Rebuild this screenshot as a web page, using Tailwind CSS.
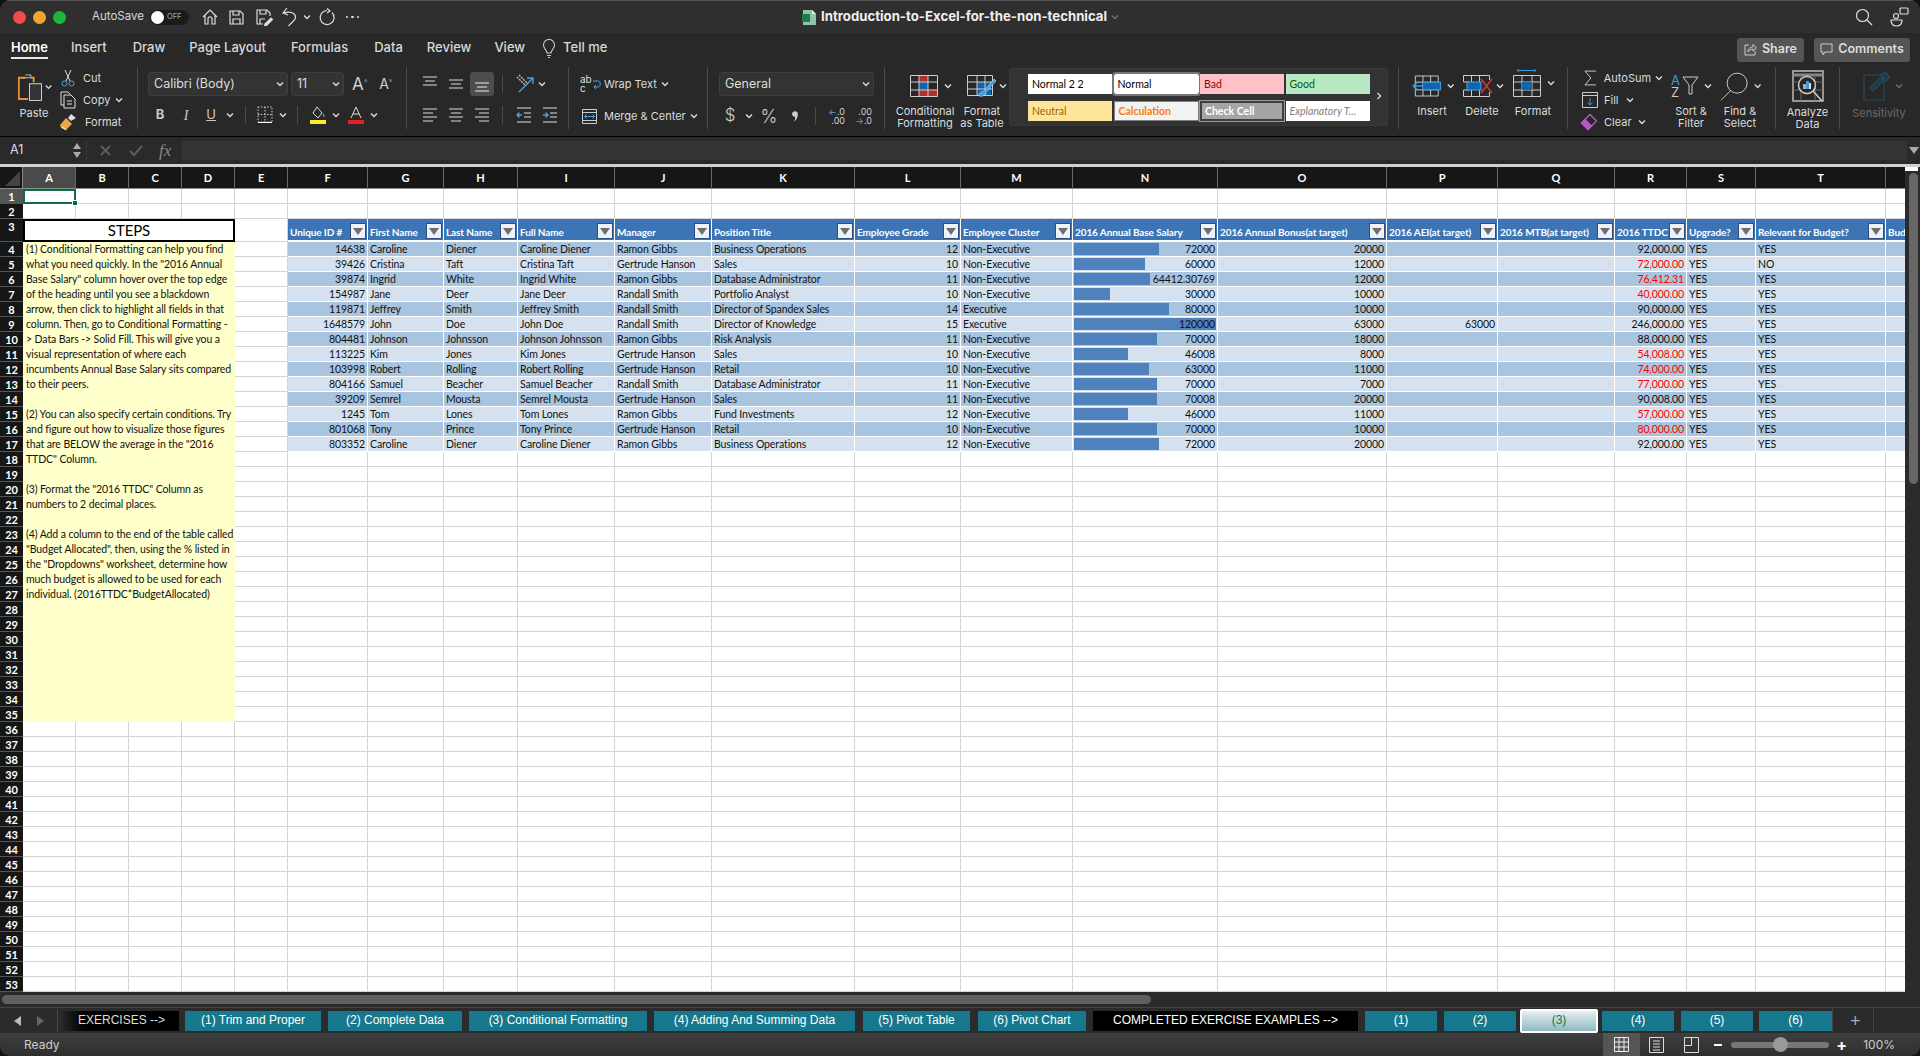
<!DOCTYPE html>
<html lang="en">
<head>
  <meta charset="UTF-8" />
  <title>Introduction-to-Excel-for-the-non-technical</title>
  <script src="https://cdn.jsdelivr.net/npm/@tailwindcss/browser@4"></script>
</head>
<body class="bg-[#111] overflow-hidden">
  <svg class="hidden">
    <symbol id="chev" viewBox="0 0 12 12"><path d="M3 4.5l3 3 3-3" fill="none" stroke="#d8d8d8" stroke-width="1.5"/></symbol>
  </svg>
  <div class="w-[1920px] h-[1056px] flex flex-col overflow-hidden rounded-[10px] text-[#e0e0e0] [font-family:Inter,sans-serif]">

    <!-- Title bar -->
    <div class="h-[33px] shrink-0 bg-[#2f2f2f] border-t border-[#555] flex items-center">
      <div class="w-[802px] flex items-center">
        <span class="ml-[13px] w-[13px] h-[13px] rounded-full bg-[#ee4c4c]"></span>
        <span class="ml-[7px] w-[13px] h-[13px] rounded-full bg-[#f2a52e]"></span>
        <span class="ml-[7px] w-[13px] h-[13px] rounded-full bg-[#1fb53d]"></span>
        <span class="ml-[26px] text-[11.5px] text-[#d8d8d8]">AutoSave</span>
        <div class="ml-[6px] w-[39px] h-[15px] rounded-full bg-[#1b1b1b] flex items-center">
          <span class="ml-[1px] w-[13px] h-[13px] rounded-full bg-white"></span>
          <span class="ml-[3px] text-[7.5px] text-[#aaa]">OFF</span>
        </div>
        <svg class="ml-[12px]" width="18" height="18" viewBox="0 0 18 18" fill="none" stroke="#ddd" stroke-width="1.2"><path d="M2 9l7-7 7 7M4 7v9h3v-5c0-3 4-3 4 0v5h3V7"/></svg>
        <svg class="ml-[9px]" width="17" height="17" viewBox="0 0 17 17" fill="none" stroke="#ddd" stroke-width="1.2"><path d="M2 2h10l3 3v10H2zM5 2v4h6V2M5 15v-5h7v5"/></svg>
        <svg class="ml-[10px]" width="18" height="18" viewBox="0 0 18 18" fill="none" stroke="#ddd" stroke-width="1.2"><path d="M8 16H2V2h10l3 3v3M5 2v4h6V2M5 16v-5h5"/><path d="M10 16l6-6 1.5 1.5-6 6-2 .5z" fill="#ddd"/></svg>
        <svg class="ml-[9px]" width="16" height="20" viewBox="0 0 16 20" fill="none" stroke="#ddd" stroke-width="1.2"><path d="M5 1L1 6l5 2M1.500 6c9-3 14 2 11 7l-6 6"/></svg>
        <svg class="ml-[3px]" width="12" height="12"><use href="#chev"/></svg>
        <svg class="ml-[5px]" width="18" height="18" viewBox="0 0 18 18" fill="none" stroke="#ddd" stroke-width="1.2"><path d="M9 2.500a7 7 0 1 0 5 2M9 .5l3 2.500-3 2"/></svg>
        <span class="ml-[10px] flex gap-[3px]"><i class="w-[2.500px] h-[2.500px] rounded-full bg-[#ddd]"></i><i class="w-[2.500px] h-[2.500px] rounded-full bg-[#ddd]"></i><i class="w-[2.500px] h-[2.500px] rounded-full bg-[#ddd]"></i></span>
      </div>
      <svg width="15" height="17" viewBox="0 0 15 17"><path d="M1 1h9l4 4v11H1z" fill="#8ec5a8"/><path d="M10 1v4h4" fill="#dff0e6"/><rect x="0" y="5" width="8" height="8" fill="#1f7a4c"/></svg>
      <span class="ml-[4px] text-[13.2px] font-bold text-[#eee]">Introduction-to-Excel-for-the-non-technical</span>
      <svg class="ml-[2px] opacity-40" width="12" height="12"><use href="#chev"/></svg>
      <svg class="ml-auto" width="18" height="18" viewBox="0 0 18 18" fill="none" stroke="#ddd" stroke-width="1.2"><circle cx="7.500" cy="7.500" r="6"/><path d="M12 12l5 5"/></svg>
      <svg class="ml-[17px] mr-[11px]" width="19" height="20" viewBox="0 0 19 20" fill="none" stroke="#ddd" stroke-width="1.2"><rect x="10" y="1" width="8" height="6" rx="1"/><circle cx="6" cy="9" r="2.500"/><path d="M1 13h11c0 4-2 6-5.500 6S1 17 1 13z"/></svg>
    </div>

    <!-- Ribbon -->
    <div class="h-[104px] shrink-0 bg-[#282828] border-b border-black">
      <div class="h-[30px] flex items-center text-[13px] font-medium text-[#d8d8d8]">
        <span class="ml-[11px] text-white font-semibold border-b-2 border-[#e8e8e8] h-[22px] leading-[20px]">Home</span>
        <span class="ml-[23px]">Insert</span>
        <span class="ml-[26px]">Draw</span>
        <span class="ml-[24px]">Page Layout</span>
        <span class="ml-[25px]">Formulas</span>
        <span class="ml-[26px]">Data</span>
        <span class="ml-[24px]">Review</span>
        <span class="ml-[23px]">View</span>
        <svg class="ml-[17px]" width="14" height="19" viewBox="0 0 14 19" fill="none" stroke="#ccc" stroke-width="1.1"><path d="M5 14c0-3-3.500-4-3.500-8a5.500 5.500 0 0 1 11 0c0 4-3.500 5-3.500 8zM5 16.500h4M6 18.500h2"/></svg>
        <span class="ml-[7px]">Tell me</span>
        <div class="ml-auto flex text-[12.5px] font-semibold text-[#ddd]">
          <span class="w-[67px] h-[24px] rounded-[3px] bg-[#555] flex items-center justify-center gap-[5px] mt-[3px]">
            <svg width="13" height="13" viewBox="0 0 13 13" fill="none" stroke="#ccc"><path d="M5 2H1v10h10V8M4 9c0-4 3-5 5-5V1.500l3.500 3.500L9 8V6C7 6 5 7 4 9z"/></svg>Share</span>
          <span class="ml-[10px] mr-[10px] w-[96px] h-[24px] rounded-[3px] bg-[#555] flex items-center justify-center gap-[5px] mt-[3px]">
            <svg width="13" height="13" viewBox="0 0 13 13" fill="none" stroke="#ccc"><path d="M1 1h11v8H5l-2 3V9H1z"/></svg>Comments</span>
        </div>
      </div>

      <div class="mt-[4px] flex text-[11px] text-[#dcdcdc]">
        <!-- Clipboard -->
        <div class="w-[138px] h-[62px] border-r border-[#4a4a4a] flex">
          <div class="ml-[14px] w-[40px] flex flex-col">
            <div class="mt-[5px] flex items-center">
              <svg class="ml-[3px]" width="28" height="30" viewBox="0 0 28 30" fill="none"><path d="M9 5H2v23h10" stroke="#e0923a" stroke-width="2"/><path d="M6 5h9V2h-3M9 2h3" stroke="#ccc"/><path d="M15 5h3v5" stroke="#e0923a" stroke-width="2"/><rect x="13.500" y="11.500" width="13" height="18" stroke="#ddd" fill="#333"/></svg>
              <svg width="12" height="12"><use href="#chev"/></svg>
            </div>
            <span class="mt-[3px] text-center">Paste</span>
          </div>
          <div class="ml-[6px] flex flex-col">
            <div class="h-[22px] shrink-0 flex items-center">
              <svg width="16" height="18" viewBox="0 0 16 18" fill="none" stroke="#ddd"><path d="M5 1l5 11M11 1L6 12" /><circle cx="4.500" cy="14.500" r="2.500" stroke="#4aa3df"/><circle cx="11.500" cy="14.500" r="2.500" stroke="#4aa3df"/></svg>
              <span class="ml-[7px]">Cut</span>
            </div>
            <div class="h-[22px] shrink-0 flex items-center">
              <svg width="16" height="18" viewBox="0 0 16 18" fill="none" stroke="#ddd"><path d="M4 14H1V1h7l2 2M4 4h7l4 4v9H4zM7 10h5M7 13h5"/></svg>
              <span class="ml-[7px]">Copy</span>
              <svg class="ml-[3px]" width="12" height="12"><use href="#chev"/></svg>
            </div>
            <div class="h-[22px] shrink-0 flex items-center">
              <svg width="17" height="18" viewBox="0 0 17 18"><path d="M11 1l5 4-5 3-3-3z" fill="#ddd"/><path d="M6 5l6 6-6 6-5-2-1-3z" fill="#eaa74a"/><path d="M2 14l4 3" stroke="#fff"/></svg>
              <span class="ml-[8px]">Format</span>
            </div>
          </div>
        </div>

        <!-- Font -->
        <div class="w-[269px] h-[62px] border-r border-[#4a4a4a]">
          <div class="mt-[5px] h-[24px] flex items-center">
            <div class="ml-[10px] w-[140px] h-[24px] rounded-[3px] bg-[#333] border border-[#3e3e3e] flex items-center pl-[5px] text-[12.5px]">Calibri (Body)<svg class="ml-auto mr-[1px]" width="12" height="12"><use href="#chev"/></svg></div>
            <div class="ml-[3px] w-[53px] h-[24px] rounded-[3px] bg-[#333] border border-[#3e3e3e] flex items-center pl-[5px] text-[12.5px]">11<svg class="ml-auto mr-[1px]" width="12" height="12"><use href="#chev"/></svg></div>
            <span class="ml-[6px] w-[20px] text-[17px] leading-none text-center text-[#cfcfcf]">A<sup class="text-[#4aa3df] text-[9px]">˄</sup></span>
            <span class="ml-[6px] w-[20px] text-[14px] leading-none text-center text-[#cfcfcf]">A<sup class="text-[#4aa3df] text-[9px]">˅</sup></span>
          </div>
          <div class="mt-[7px] h-[24px] flex items-center text-[#c9c9c9]">
            <span class="ml-[12px] w-[20px] text-center font-bold text-[13px]">B</span>
            <span class="ml-[6px] w-[20px] text-center italic text-[14px] [font-family:'Liberation_Serif',serif]">I</span>
            <span class="ml-[5px] w-[20px] text-center underline text-[13px]">U</span>
            <svg class="ml-[3px]" width="12" height="12"><use href="#chev"/></svg>
            <i class="ml-[9px] w-px h-[18px] bg-[#4a4a4a]"></i>
            <svg class="ml-[9px]" width="20" height="20" viewBox="0 0 20 20" fill="none" stroke="#ccc" stroke-dasharray="1.500 1.500"><path d="M3 2h14v15H3zM10 2v15M3 9.500h14"/><path d="M3 17.500h14" stroke="#fff" stroke-dasharray="none"/></svg>
            <svg class="ml-[2px]" width="12" height="12"><use href="#chev"/></svg>
            <i class="ml-[8px] w-px h-[18px] bg-[#4a4a4a]"></i>
            <svg class="ml-[10px]" width="20" height="20" viewBox="0 0 20 20" fill="none" stroke="#ddd"><path d="M9 2l5 6-4 5-5-5z"/><path d="M15 8c2 2 2 4 1 4s-1-2-1-4z" fill="#4aa3df" stroke="none"/><rect x="2" y="15" width="16" height="4" fill="#f7ec2d" stroke="none"/></svg>
            <svg class="ml-[2px]" width="12" height="12"><use href="#chev"/></svg>
            <svg class="ml-[4px]" width="20" height="20" viewBox="0 0 20 20" fill="none" stroke="#ddd"><path d="M5 13l5-11 5 11M7 9h6"/><rect x="2" y="15" width="16" height="4" fill="#ea1c24" stroke="none"/></svg>
            <svg class="ml-[2px]" width="12" height="12"><use href="#chev"/></svg>
          </div>
        </div>

        <!-- Alignment -->
        <div class="w-[162px] h-[62px] border-r border-[#4a4a4a]">
          <div class="mt-[5px] h-[24px] flex items-center">
            <svg class="ml-[11px]" width="24" height="24" viewBox="0 0 24 24" stroke="#ddd"><path d="M5 5h14M7 9h10M5 13h14"/></svg>
            <svg class="ml-[2px]" width="24" height="24" viewBox="0 0 24 24" stroke="#ddd"><path d="M5 8h14M7 12h10M5 16h14"/></svg>
            <div class="ml-[2px] w-[24px] h-[24px] rounded-[3px] bg-[#4d4d4d]"><svg width="24" height="24" viewBox="0 0 24 24" stroke="#eee"><path d="M5 11h14M7 15h10M5 19h14"/></svg></div>
            <i class="ml-[8px] w-px h-[18px] bg-[#4a4a4a]"></i>
            <svg class="ml-[9px]" width="24" height="24" viewBox="0 0 24 24" fill="none"><path d="M5 5l9 9M7 3l9 9" stroke="#ccc" stroke-width="1.300" stroke-dasharray="2 1"/><path d="M7 20L20 7M15 6h6v6" stroke="#4aa3df" stroke-width="1.300"/></svg>
            <svg width="12" height="12"><use href="#chev"/></svg>
          </div>
          <div class="mt-[7px] h-[24px] flex items-center">
            <svg class="ml-[11px]" width="24" height="24" viewBox="0 0 24 24" stroke="#ddd"><path d="M5 6h14M5 10h10M5 14h14M5 18h10"/></svg>
            <svg class="ml-[2px]" width="24" height="24" viewBox="0 0 24 24" stroke="#ddd"><path d="M5 6h14M7 10h10M5 14h14M7 18h10"/></svg>
            <svg class="ml-[2px]" width="24" height="24" viewBox="0 0 24 24" stroke="#ddd"><path d="M5 6h14M9 10h10M5 14h14M9 18h10"/></svg>
            <i class="ml-[8px] w-px h-[18px] bg-[#4a4a4a]"></i>
            <svg class="ml-[9px]" width="24" height="24" viewBox="0 0 24 24" fill="none"><path d="M5 5h14M12 10h7M12 14h7M5 19h14" stroke="#ddd"/><path d="M10 12H5M7.500 9.500L5 12l2.500 2.500" stroke="#4aa3df" stroke-width="1.300"/></svg>
            <svg class="ml-[2px]" width="24" height="24" viewBox="0 0 24 24" fill="none"><path d="M5 5h14M12 10h7M12 14h7M5 19h14" stroke="#ddd"/><path d="M5 12h5M7.500 9.500L10 12l-2.500 2.500" stroke="#4aa3df" stroke-width="1.300"/></svg>
          </div>
        </div>

        <!-- Wrap and merge -->
        <div class="w-[139px] h-[62px] border-r border-[#4a4a4a]">
          <div class="mt-[5px] h-[24px] flex items-center">
            <span class="ml-[11px] w-[22px] flex items-center text-[#ddd] leading-[9px] text-[10px]"><span>ab<br />c</span><svg width="9" height="14" viewBox="0 0 9 14" fill="none" stroke="#4aa3df"><path d="M1 4h5c3 0 3 6 0 6H2M4 8l-2 2 2 2"/></svg></span>
            <span class="ml-[2px]">Wrap Text</span>
            <svg class="ml-[2px]" width="12" height="12"><use href="#chev"/></svg>
          </div>
          <div class="mt-[8px] h-[24px] flex items-center">
            <svg class="ml-[13px]" width="15" height="15" viewBox="0 0 15 15" fill="none" stroke="#ccc"><path d="M.5.500h14v14H.5zM.5 3.500h14M.5 11.500h14"/><path d="M2.500 7.500h10M4.500 5.500l-2 2 2 2M10.500 5.500l2 2-2 2" stroke="#4aa3df"/></svg>
            <span class="ml-[7px]">Merge &amp; Center</span>
            <svg class="ml-[2px]" width="12" height="12"><use href="#chev"/></svg>
          </div>
        </div>

        <!-- Number -->
        <div class="w-[177px] h-[62px] border-r border-[#4a4a4a]">
          <div class="mt-[5px] h-[24px] flex items-center">
            <div class="ml-[11px] w-[155px] h-[24px] rounded-[3px] bg-[#333] border border-[#3e3e3e] flex items-center pl-[5px] text-[12.5px]">General<svg class="ml-auto mr-[1px]" width="12" height="12"><use href="#chev"/></svg></div>
          </div>
          <div class="mt-[8px] h-[24px] flex items-center text-[#cfcfcf]">
            <span class="ml-[12px] w-[20px] text-center text-[17px] font-light">$</span>
            <svg class="ml-[3px]" width="12" height="12"><use href="#chev"/></svg>
            <span class="ml-[4px] w-[20px] text-center text-[18px] font-light">%</span>
            <svg class="ml-[6px]" width="20" height="20" viewBox="0 0 20 20"><circle cx="10" cy="8" r="2.800" fill="#cfcfcf"/><path d="M12.500 8c.5 4-1.500 6.500-4 7.500 1.500-1.500 2-3 1.500-5z" fill="#cfcfcf"/></svg>
            <i class="ml-[10px] w-px h-[18px] bg-[#4a4a4a]"></i>
            <span class="ml-[9px] w-[20px] leading-[9px] text-[9px] text-right"><b class="font-normal text-[#4aa3df]">←</b>.0<br />.00</span>
            <span class="ml-[7px] w-[20px] leading-[9px] text-[9px] text-right">.00<br /><b class="font-normal text-[#4aa3df]">→</b>.0</span>
          </div>
        </div>

        <!-- Styles -->
        <div class="w-[514px] h-[62px] border-r border-[#4a4a4a] flex">
          <div class="ml-[8px] w-[64px] flex flex-col items-center">
            <div class="mt-[8px] h-[22px] flex items-center">
              <svg class="ml-[13px]" width="28" height="22" viewBox="0 0 28 22" fill="none"><rect x="9" y="1" width="9" height="6" fill="#b32d2d"/><rect x="9" y="7" width="9" height="8" fill="#0f66b0"/><rect x="9" y="15" width="18" height="6" fill="#b32d2d"/><path d="M.5.500h27v21H.5zM9 .5v21M18 .5v21M.5 7h27M.5 15h27" stroke="#ccc"/></svg>
              <svg class="ml-[4px]" width="12" height="12"><use href="#chev"/></svg>
            </div>
            <span class="mt-[8px] text-center leading-[12px]">Conditional Formatting</span>
          </div>
          <div class="w-[50px] flex flex-col items-center">
            <div class="mt-[8px] h-[22px] flex items-center">
              <svg class="ml-[11px]" width="30" height="24" viewBox="0 0 30 24" fill="none"><rect x="10" y="8" width="14" height="14" fill="#0f66b0"/><path d="M.5 1.500h25v20H.5zM10 1.500v20M18 1.500v20M.5 8h25M.5 15h25" stroke="#ccc"/><path d="M12 22c0-4 3-4 5-5L27 5l2 2-10 11c0 3-3 5-7 4z" fill="#3d9bd8" stroke="#ddd" stroke-width=".6"/></svg>
              <svg width="12" height="12"><use href="#chev"/></svg>
            </div>
            <span class="mt-[8px] text-center leading-[12px]">Format<br />as Table</span>
          </div>
          <div class="ml-[2px] mt-[1px] w-[379px] h-[58px] rounded-[3px] bg-[#333] border border-[#3a3a3a] flex">
            <div class="ml-[18px] mt-[5px] grid grid-cols-[84px_85px_84px_84px] grid-rows-[20px_20px] gap-x-[1.5px] gap-y-[7px] text-[10.5px] [font-family:Lato,sans-serif]">
              <div class="bg-white text-black pl-[4px] leading-[20px]">Normal 2 2</div>
              <div class="bg-white text-black pl-[4px] leading-[20px] outline-2 outline-[#777] rounded-[2px]">Normal</div>
              <div class="bg-[#ffc0c8] text-[#9c0006] pl-[4px] leading-[20px]">Bad</div>
              <div class="bg-[#b9e9c4] text-[#006100] pl-[4px] leading-[20px]">Good</div>
              <div class="bg-[#ffe599] text-[#9c6500] pl-[4px] leading-[20px]">Neutral</div>
              <div class="bg-[#f2f2f2] text-[#fa7d00] font-bold pl-[4px] leading-[18px] border border-[#7f7f7f]">Calculation</div>
              <div class="bg-[#a5a5a5] text-white font-bold pl-[3px] leading-[16px] border-2 border-double border-[#3f3f3f] outline outline-[#999]">Check Cell</div>
              <div class="bg-white text-[#7f7f7f] italic pl-[4px] leading-[20px]">Explanatory T...</div>
            </div>
            <svg class="ml-[3px] mt-[21px]" width="12" height="12" viewBox="0 0 12 12"><path d="M4.500 3l3 3-3 3" fill="none" stroke="#ddd" stroke-width="1.300"/></svg>
          </div>
        </div>

        <!-- Cells -->
        <div class="w-[169px] h-[62px] border-r border-[#4a4a4a] flex">
          <div class="ml-[9px] w-[48px] flex flex-col">
            <div class="mt-[8px] h-[22px] flex items-center">
              <svg class="ml-[4px]" width="31" height="22" viewBox="0 0 31 22" fill="none"><path d="M3.500.5h24v21h-24zM11.500.5v21M19.500.5v21M3.500 7h24M3.500 15h24" stroke="#ccc"/><rect x="11" y="7" width="19" height="8" fill="#0f66b0" stroke="#4aa3df"/><path d="M12 11H2M6 6.500L1.500 11 6 15.500" stroke="#3d9bd8" stroke-width="1.800"/></svg>
              <svg class="ml-[3px]" width="12" height="12"><use href="#chev"/></svg>
            </div>
            <span class="mt-[6px] text-center">Insert</span>
          </div>
          <div class="ml-[2px] w-[48px] flex flex-col">
            <div class="mt-[8px] h-[22px] flex items-center">
              <svg class="ml-[5px]" width="30" height="22" viewBox="0 0 30 22" fill="none"><path d="M.5.500h26M.5 21.500h26M8.500.5v21M16.500.5v21M.5 7h6M.5 15h6M.5.500V7M.5 15v6.500M26.500.5V5M26.500 17v4.500" stroke="#ccc"/><rect x="4" y="7" width="14" height="8" fill="#0f66b0" stroke="#4aa3df"/><path d="M18 4l11 14M29 4L18 18" stroke="#e0383c" stroke-width="1.300"/></svg>
              <svg class="ml-[1px]" width="12" height="12"><use href="#chev"/></svg>
            </div>
            <span class="mt-[6px] text-center">Delete</span>
          </div>
          <div class="ml-[3px] w-[48px] flex flex-col">
            <div class="mt-[2px] h-[28px] flex items-center">
              <svg class="ml-[4px]" width="28" height="28" viewBox="0 0 28 28" fill="none"><path d="M5 1.500h17M5 0v3M22 0v3" stroke="#3d9bd8"/><path d="M.5 6.500h27v21H.5zM9 6.500v21M19 6.500v21M.5 13h27M.5 21h27" stroke="#ccc"/><rect x="9" y="13" width="10" height="8" fill="#0f66b0"/></svg>
              <svg class="ml-[4px]" width="12" height="12"><use href="#chev"/></svg>
            </div>
            <span class="mt-[6px] text-center">Format</span>
          </div>
        </div>

        <!-- Editing -->
        <div class="w-[208px] h-[62px] border-r border-[#4a4a4a] flex">
          <div class="w-[97px] flex flex-col">
            <div class="h-[22px] shrink-0 flex items-center">
              <svg class="ml-[12px]" width="20" height="20" viewBox="0 0 20 20" fill="none" stroke="#ccc"><path d="M16 3H5l6 7-6 7h11"/></svg>
              <span class="ml-[4px]">AutoSum</span>
              <svg class="ml-[2px]" width="12" height="12"><use href="#chev"/></svg>
            </div>
            <div class="h-[22px] shrink-0 flex items-center">
              <svg class="ml-[14px]" width="16" height="16" viewBox="0 0 16 16" fill="none"><path d="M.5.500h15v15H.5zM.5 3.500h15" stroke="#ccc"/><path d="M8 6v7M5.500 10.500L8 13l2.500-2.500" stroke="#3d9bd8"/></svg>
              <span class="ml-[6px]">Fill</span>
              <svg class="ml-[5px]" width="12" height="12"><use href="#chev"/></svg>
            </div>
            <div class="h-[22px] shrink-0 flex items-center">
              <svg class="ml-[12px]" width="18" height="18" viewBox="0 0 18 18" fill="none" stroke="#b45cc0" stroke-width="1.300"><path d="M1.500 10L10 1.500 16.500 8 8 16.500z"/><path d="M1.500 10L5 6.500 11.500 13 8 16.500z" fill="#b45cc0"/></svg>
              <span class="ml-[6px]">Clear</span>
              <svg class="ml-[4px]" width="12" height="12"><use href="#chev"/></svg>
            </div>
          </div>
          <div class="w-[52px] flex flex-col">
            <div class="mt-[6px] h-[26px] flex items-center">
              <span class="ml-[6px] w-[11px] leading-[12px] text-[13px] text-[#3d9bd8]">A<br /><span class="text-[#ccc]">Z</span></span>
              <svg width="17" height="20" viewBox="0 0 17 20" fill="none" stroke="#ccc"><path d="M1 1h15l-6 8v9H7V9z"/></svg>
              <svg class="ml-[3px]" width="12" height="12"><use href="#chev"/></svg>
            </div>
            <span class="mt-[6px] text-center leading-[12px]">Sort &amp;<br />Filter</span>
          </div>
          <div class="w-[46px] flex flex-col">
            <div class="mt-[5px] h-[28px] flex items-center">
              <svg class="ml-[3px]" width="30" height="30" viewBox="0 0 30 30" fill="none" stroke="#ccc"><circle cx="18" cy="12" r="10.500"/><path d="M11 20L1 30"/></svg>
              <svg class="ml-[3px]" width="12" height="12"><use href="#chev"/></svg>
            </div>
            <span class="mt-[5px] text-center leading-[12px]">Find &amp;<br />Select</span>
          </div>
        </div>

        <!-- Analyze -->
        <div class="w-[64px] h-[62px] border-r border-[#4a4a4a] flex flex-col items-center">
          <svg class="mt-[3px] shrink-0" width="32" height="32" viewBox="0 0 32 32" fill="none"><path d="M1 1h30v30H1z" stroke="#bbb" stroke-width="1.500"/><path d="M1 5h30" stroke="#888" stroke-width="3"/><path d="M1 12h30M1 20h30M9 5v26M23 5v26" stroke="#666"/><circle cx="15" cy="15" r="8.500" fill="#282828" stroke="#ccc" stroke-width="1.500"/><rect x="11" y="14" width="3" height="5" fill="#aaa"/><rect x="14" y="11" width="3" height="8" fill="#3d9bd8"/><rect x="17" y="13" width="2" height="6" fill="#ddd"/><path d="M21 21l9 10" stroke="#ccc" stroke-width="1.500"/></svg>
          <span class="mt-[4px] text-center leading-[12px]">Analyze<br />Data</span>
        </div>

        <!-- Sensitivity -->
        <div class="w-[78px] h-[62px] flex flex-col items-center text-[#6b6b6b]">
          <div class="mt-[4px] h-[30px] flex items-center">
            <svg class="ml-[10px]" width="28" height="30" viewBox="0 0 28 30" fill="none" stroke="#234a5e" stroke-width="1.200"><path d="M1 4h20v25H1z"/><path d="M7 17L18 6l3 3-11 11zM18 4l4-3 5 5-4 4z" fill="#1e3a4a"/></svg>
            <svg class="ml-[2px] opacity-40" width="12" height="12"><use href="#chev"/></svg>
          </div>
          <span class="mt-[4px]">Sensitivity</span>
        </div>
      </div>
    </div>

    <!-- Formula bar -->
    <div class="h-[27px] shrink-0 bg-[#2a2a2a] flex items-center text-[12.5px]">
      <span class="ml-[10px] w-[60px] text-[#ddd]">A1</span>
      <span class="w-[14px] flex flex-col items-center gap-[3px]">
        <i class="w-0 h-0 border-x-[4px] border-x-transparent border-b-[6px] border-b-[#aaa]"></i>
        <i class="w-0 h-0 border-x-[4px] border-x-transparent border-t-[6px] border-t-[#aaa]"></i>
      </span>
      <i class="ml-[2px] w-px h-[20px] bg-[#3a3a3a]"></i>
      <svg class="ml-[12px]" width="13" height="13" viewBox="0 0 13 13" stroke="#5d5d5d" stroke-width="2"><path d="M2 2l9 9M11 2l-9 9"/></svg>
      <svg class="ml-[17px]" width="14" height="13" viewBox="0 0 14 13" fill="none" stroke="#5d5d5d" stroke-width="2"><path d="M1 7l4 4 8-9"/></svg>
      <span class="ml-[16px] w-[20px] italic text-[17px] text-[#888] [font-family:'Liberation_Serif',serif]">fx</span>
      <div class="ml-[3px] w-[1725px] h-[19px] bg-[#333]"></div>
      <i class="ml-[2px] w-0 h-0 border-x-[5px] border-x-transparent border-t-[7px] border-t-[#aaa]"></i>
    </div>
    <div class="h-[3px] shrink-0 bg-[#d0d0d0]"></div>

    <!-- Sheet -->
    <div class="h-[825px] shrink-0 flex bg-white">
      <div class="w-[1905px] overflow-hidden">
        <div id="sheet" class="grid w-max grid-cols-[23px_53px_53px_53px_53px_53px_80px_76px_74px_97px_97px_143px_106px_112px_145px_169px_111px_117px_72px_69px_130px_60px] grid-rows-[22px_15px_15px_23px_repeat(50,15px)] text-[10.5px] tracking-[-0.1px] leading-[14px] text-[#111] [font-family:Lato,sans-serif]"></div>
      </div>
      <div class="w-[15px] bg-[#2a2a2a] flex flex-col items-start">
        <div class="w-[13px] h-[4px] bg-white"></div>
        <div class="mt-[2px] ml-[4px] w-[9px] h-[311px] rounded-full bg-[#666]"></div>
      </div>
    </div>

    <!-- Horizontal scroll -->
    <div class="h-[15px] shrink-0 bg-[#2a2a2a] flex items-center">
      <div class="ml-[2px] w-[1149px] h-[9px] rounded-full bg-[#5f5f5f]"></div>
    </div>

    <!-- Sheet tabs -->
    <div class="h-[26px] shrink-0 bg-[#2b2b2b] border-t border-[#444] flex items-center text-[12px] text-white [font-family:'Liberation_Sans',sans-serif]">
      <i class="ml-[14px] w-0 h-0 border-y-[5px] border-y-transparent border-r-[7px] border-r-[#bbb]"></i>
      <i class="ml-[16px] w-0 h-0 border-y-[5px] border-y-transparent border-l-[7px] border-l-[#666]"></i>
      <i class="ml-[13px] w-px h-[24px] bg-[#444]"></i>
      <div class="ml-[2px] w-[119px] h-[20px] bg-gradient-to-r from-[#2b2b2b] via-black via-30% to-black pl-[18px] leading-[19px] text-[#ddd]">EXERCISES --&gt;</div>
      <div class="ml-[6px] w-[136px] h-[20px] bg-[#17778c] text-center leading-[19px]">(1) Trim and Proper</div>
      <div class="ml-[7px] w-[134px] h-[20px] bg-[#17778c] text-center leading-[19px]">(2) Complete Data</div>
      <div class="ml-[7px] w-[178px] h-[20px] bg-[#17778c] text-center leading-[19px]">(3) Conditional Formatting</div>
      <div class="ml-[7px] w-[201px] h-[20px] bg-[#17778c] text-center leading-[19px]">(4) Adding And Summing Data</div>
      <div class="ml-[8px] w-[107px] h-[20px] bg-[#17778c] text-center leading-[19px]">(5) Pivot Table</div>
      <div class="ml-[8px] w-[108px] h-[20px] bg-[#17778c] text-center leading-[19px]">(6) Pivot Chart</div>
      <div class="ml-[7px] w-[265px] h-[20px] bg-black text-center leading-[19px]">COMPLETED EXERCISE EXAMPLES --&gt;</div>
      <div class="ml-[7px] w-[72px] h-[20px] bg-[#17778c] text-center leading-[19px]">(1)</div>
      <div class="ml-[7px] w-[72px] h-[20px] bg-[#17778c] text-center leading-[19px]">(2)</div>
      <div class="ml-[4px] w-[78px] h-[24px] border-2 border-white bg-gradient-to-b from-[#e6f0f2] to-[#8fb9c2] text-center leading-[19px] text-[#0b7a4a] rounded-[2px]">(3)</div>
      <div class="ml-[4px] w-[72px] h-[20px] bg-[#17778c] text-center leading-[19px]">(4)</div>
      <div class="ml-[7px] w-[72px] h-[20px] bg-[#17778c] text-center leading-[19px]">(5)</div>
      <div class="ml-[6px] w-[73px] h-[20px] bg-[#17778c] text-center leading-[19px]">(6)</div>
      <i class="w-px h-[24px] bg-[#444]"></i>
      <span class="ml-[17px] text-[18px] leading-none text-[#aaa]">+</span>
      <i class="ml-[12px] w-px h-[24px] bg-[#444]"></i>
    </div>

    <!-- Status bar -->
    <div class="h-[23px] shrink-0 bg-gradient-to-b from-[#3f3f3f] to-[#2e2e2e] flex items-center text-[12px] text-[#ccc]">
      <span class="ml-[24px]">Ready</span>
      <div class="ml-auto w-[37px] h-[23px] bg-[#555] flex items-center justify-center">
        <svg width="15" height="15" viewBox="0 0 15 15" fill="none" stroke="#eee"><path d="M.5.500h14v14H.5zM5 .5v14M10 .5v14M.5 5h14M.5 10h14"/></svg>
      </div>
      <svg class="ml-[9px]" width="15" height="16" viewBox="0 0 15 16" fill="none" stroke="#ddd"><path d="M.5.500h14v15H.5zM4 4h7M4 7h7M4 10h7M4 13h7"/></svg>
      <svg class="ml-[20px]" width="15" height="16" viewBox="0 0 15 16" fill="none" stroke="#ddd"><path d="M.5.500h14v15H.5zM7.500.5v8H.5"/></svg>
      <span class="ml-[15px] w-[8px] h-[2px] bg-white"></span>
      <div class="ml-[9px] w-[98px] h-[6px] rounded-full bg-[#777] flex items-center">
        <span class="ml-[42px] w-[15px] h-[15px] rounded-full bg-[#999]"></span>
      </div>
      <span class="ml-[7px] text-[16px] font-bold leading-none text-white">+</span>
      <span class="ml-[16px] mr-[25px]">100%</span>
    </div>
  </div>

  <script>
    // Sheet columns and table data (column U runs off the window, so its letter is not shown)
    const letters = ["A","B","C","D","E","F","G","H","I","J","K","L","M","N","O","P","Q","R","S","T",""];
    const heads = ["Unique ID #","First Name","Last Name","Full Name","Manager","Position Title","Employee Grade","Employee Cluster","2016 Annual Base Salary","2016 Annual Bonus(at target)","2016 AEI(at target)","2016 MTB(at target)","2016 TTDC","Upgrade?","Relevant for Budget?","Budget Allocated"];
    const NE = "Non-Executive";
    const rows = [
      [14638,"Caroline","Diener","Ramon Gibbs","Business Operations",12,NE,72000,20000,"","","92,000.00",0,"YES"],
      [39426,"Cristina","Taft","Gertrude Hanson","Sales",10,NE,60000,12000,"","","72,000.00",1,"NO"],
      [39874,"Ingrid","White","Ramon Gibbs","Database Administrator",11,NE,64412.30769,12000,"","","76,412.31",1,"YES"],
      [154987,"Jane","Deer","Randall Smith","Portfolio Analyst",10,NE,30000,10000,"","","40,000.00",1,"YES"],
      [119871,"Jeffrey","Smith","Randall Smith","Director of Spandex Sales",14,"Executive",80000,10000,"","","90,000.00",0,"YES"],
      [1648579,"John","Doe","Randall Smith","Director of Knowledge",15,"Executive",120000,63000,63000,"","246,000.00",0,"YES"],
      [804481,"Johnson","Johnsson","Ramon Gibbs","Risk Analysis",11,NE,70000,18000,"","","88,000.00",0,"YES"],
      [113225,"Kim","Jones","Gertrude Hanson","Sales",10,NE,46008,8000,"","","54,008.00",1,"YES"],
      [103998,"Robert","Rolling","Gertrude Hanson","Retail",10,NE,63000,11000,"","","74,000.00",1,"YES"],
      [804166,"Samuel","Beacher","Randall Smith","Database Administrator",11,NE,70000,7000,"","","77,000.00",1,"YES"],
      [39209,"Semrel","Mousta","Gertrude Hanson","Sales",11,NE,70008,20000,"","","90,008.00",0,"YES"],
      [1245,"Tom","Lones","Ramon Gibbs","Fund Investments",12,NE,46000,11000,"","","57,000.00",1,"YES"],
      [801068,"Tony","Prince","Gertrude Hanson","Retail",10,NE,70000,10000,"","","80,000.00",1,"YES"],
      [803352,"Caroline","Diener","Ramon Gibbs","Business Operations",12,NE,72000,20000,"","","92,000.00",0,"YES"],
    ];
    const steps = [
      '(1) Conditional Formatting can help you find','what you need quickly. In the "2016 Annual','Base Salary" column hover over the top edge','of the heading until you see a blackdown','arrow, then click to highlight all fields in that','column. Then, go to Conditional Formatting -','> Data Bars -> Solid Fill. This will give you a','visual representation of where each','incumbents Annual Base Salary sits compared','to their peers.','',
      '(2) You can also specify certain conditions. Try','and figure out how to visualize those figures','that are BELOW the average in the "2016','TTDC" Column.','',
      '(3) Format the "2016 TTDC" Column as','numbers to 2 decimal places.','',
      '(4) Add a column to the end of the table called','"Budget Allocated", then, using the % listed in','the "Dropdowns" worksheet, determine how','much budget is allowed to be used for each','individual. (2016TTDC*BudgetAllocated)'
    ];

    const esc = (s) => String(s).replace(/&/g, "&amp;").replace(/</g, "&lt;").replace(/>/g, "&gt;");
    const blank = '<div class="border-r border-b border-[#d4d4d4]"></div>';
    const rowHead = (n) => `<div class="${n === 1 ? "bg-[#555]" : "bg-[#161616]"} border-b border-[#555] text-white font-bold text-center leading-[15px] text-[11px]">${n}</div>`;

    let html = '<div class="bg-[#161616] border-b border-r border-[#8a8a8a] flex items-end justify-end"><div class="w-0 h-0 border-l-[15px] border-l-transparent border-b-[15px] border-b-[#444] mr-[2px] mb-[2px]"></div></div>';
    letters.forEach((l, i) => {
      html += `<div class="${i === 0 ? "bg-[#4a4a4a]" : "bg-[#161616]"} border-r border-b border-[#666] border-b-[#8a8a8a] text-white text-[11px] font-bold flex items-center justify-center">${l}</div>`;
    });

    const band = ["bg-[#a9c4de]", "bg-[#d5e1ee]"];
    const cell = (text, bg, extra) => `<div class="${bg} ${extra} border-r border-b border-white px-[2px] whitespace-nowrap overflow-hidden leading-[14px]">${esc(text)}</div>`;

    for (let n = 1; n <= 53; n++) {
      html += rowHead(n);
      const i = n - 4;
      if (n === 1) {
        // selected cell A1
        html += '<div class="relative border-2 border-[#0e6b46]"><span class="absolute -right-[4px] -bottom-[4px] w-[6px] h-[6px] bg-[#0e6b46] border border-white"></span></div>' + blank.repeat(20);
      } else if (n === 3) {
        html += '<div class="col-span-4 border-2 border-black bg-white text-center text-black text-[15px] leading-[19px]">STEPS</div>' + blank;
        heads.forEach((h, c) => {
          const btn = c === 15 ? "" : '<span class="ml-auto shrink-0 w-[16px] h-[16px] border border-[#2c4f80] bg-[#eef2f7] flex items-center justify-center"><i class="w-0 h-0 border-x-[5px] border-x-transparent border-t-[7px] border-t-[#6e6e6e]"></i></span>';
          html += `<div class="bg-[#3d75b4] border-r border-white text-white font-bold text-[10px] flex items-end pl-[2px] pr-[1px] pb-[1px] whitespace-nowrap overflow-hidden mb-[2px]">${esc(h)}${btn}</div>`;
        });
      } else if (n === 4) {
        const lines = steps.map((s) => `<div class="h-[15px] leading-[14px] whitespace-nowrap">${esc(s) || "&nbsp;"}</div>`).join("");
        html += `<div class="col-span-4 row-span-32 bg-[#ffffcc] pl-[3px] text-[#111]">${lines}</div>` + blank;
      } else if (n === 2 || n > 35) {
        html += blank.repeat(5);
      } else {
        html += blank;
      }

      if (i >= 0 && i < rows.length) {
        const r = rows[i];
        const bg = band[i % 2];
        const barW = Math.round((r[7] / 120000) * 142);
        html += cell(r[0], bg, "text-right");
        html += cell(r[1], bg, "");
        html += cell(r[2], bg, "");
        html += cell(r[1] + " " + r[2], bg, "");
        html += cell(r[3], bg, "");
        html += cell(r[4], bg, "");
        html += cell(r[5], bg, "text-right");
        html += cell(r[6], bg, "");
        html += `<div class="${bg} border-r border-b border-white flex items-center relative pl-[1px]"><span class="h-[12px] bg-[#4f81bd]" style="width:${barW}px"></span><span class="absolute right-[2px] top-0 leading-[14px]">${r[7]}</span></div>`;
        html += cell(r[8], bg, "text-right");
        html += cell(r[9], bg, "text-right");
        html += cell(r[10], bg, "text-right");
        html += cell(r[11], bg, r[12] ? "text-right text-[#ff0000]" : "text-right");
        html += cell("YES", bg, "");
        html += cell(r[13], bg, "");
        html += cell("", bg, "");
      } else if (n !== 1 && n !== 3) {
        html += blank.repeat(16);
      }
    }
    document.getElementById("sheet").innerHTML = html;
  </script>
</body>
</html>
